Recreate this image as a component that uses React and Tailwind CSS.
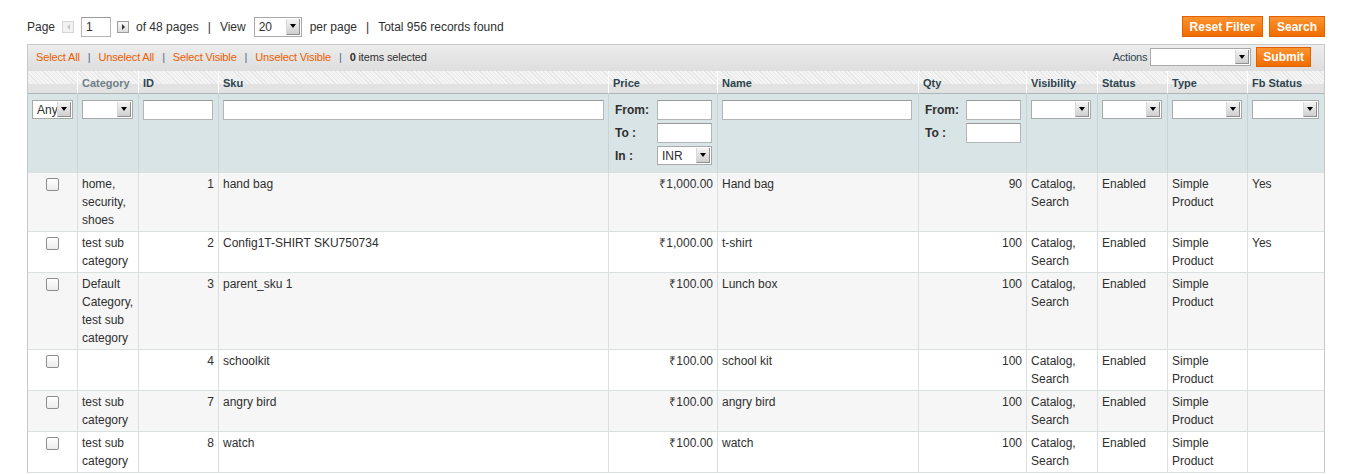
import React from "react";

const cols = [50, 61, 80, 390, 109, 201, 108, 71, 70, 80, 76];

const rows = [
  { cat: "home, security, shoes", id: 1, sku: "hand bag", price: "₹1,000.00", name: "Hand bag", qty: 90, fb: "Yes" },
  { cat: "test sub category", id: 2, sku: "Config1T-SHIRT SKU750734", price: "₹1,000.00", name: "t-shirt", qty: 100, fb: "Yes" },
  { cat: "Default Category, test sub category", id: 3, sku: "parent_sku 1", price: "₹100.00", name: "Lunch box", qty: 100, fb: "" },
  { cat: "", id: 4, sku: "schoolkit", price: "₹100.00", name: "school kit", qty: 100, fb: "" },
  { cat: "test sub category", id: 7, sku: "angry bird", price: "₹100.00", name: "angry bird", qty: 100, fb: "" },
  { cat: "test sub category", id: 8, sku: "watch", price: "₹100.00", name: "watch", qty: 100, fb: "" },
];

const DropArrow = () => (
  <span className="absolute right-[1px] top-[1px] bottom-[1px] w-[14px] flex items-center justify-center bg-[linear-gradient(#f4f4f4,#cfcfcf)] border-r border-b border-[#8f8f8f] border-l border-l-[#d8d8d8]">
    <span className="w-0 h-0 border-l-[3px] border-r-[3px] border-t-[4px] border-l-transparent border-r-transparent border-t-black" />
  </span>
);

const Select = ({ value, className = "" }) => (
  <div className={`relative bg-white border border-[#a9a9a9] text-[12px] leading-none flex items-center pl-[4px] text-[#2f2f2f] ${className}`}>
    {value}
    <DropArrow />
  </div>
);

const Input = ({ value, className = "" }) => (
  <div className={`bg-white border border-[#b5b5b5] border-t-[#9a9a9a] text-[12px] flex items-center pl-[4px] ${className}`}>{value}</div>
);

const OrangeBtn = ({ children, className = "" }) => (
  <button className={`border border-[#e26000] bg-[linear-gradient(#fb9431,#f06c00)] text-white font-bold text-[12px] leading-none ${className}`}>
    {children}
  </button>
);

const Checkbox = () => (
  <span className="inline-block w-[13px] h-[13px] rounded-[2px] border border-[#8e8e8e] bg-[linear-gradient(#ffffff,#ececec)]" />
);

const RangeFilter = ({ withCurrency }) => (
  <div className="flex flex-col gap-[3px]">
    <div className="flex items-center justify-between">
      <span className="font-bold text-[12px]">From:</span>
      <Input className="w-[55px] h-[20px]" />
    </div>
    <div className="flex items-center justify-between">
      <span className="font-bold text-[12px]">To :</span>
      <Input className="w-[55px] h-[20px]" />
    </div>
    {withCurrency && (
      <div className="flex items-center justify-between">
        <span className="font-bold text-[12px]">In :</span>
        <Select value="INR" className="w-[55px] h-[19px]" />
      </div>
    )}
  </div>
);

export default function App() {
  const th = "h-[23px] px-[4px] pt-[2px] text-left font-bold text-[11px] text-[#2d444f] border-r border-white border-b border-b-[#a9b5b8] last:border-r-0";
  const fc = "px-[4px] pt-[6px] align-top border-r border-[#c8d3d6] border-b border-b-[#dadfe0] last:border-r-0";
  const td = "px-[4px] py-[2px] align-top text-[12px] leading-[18px] border-r border-b border-[#dadfe0] last:border-r-0";

  return (
    <div className="px-[27px] pt-[16px] font-['Liberation_Sans',Arial,sans-serif] text-[#2f2f2f] bg-white min-h-[474px]">
      <div className="flex items-center justify-between h-[21px]">
        <div className="flex items-center text-[12px]">
          <span>Page</span>
          <span className="ml-[7px] w-[12px] h-[12px] border border-[#d6d6d6] bg-[#f2f2f2] flex items-center justify-center">
            <span className="w-0 h-0 border-t-[3px] border-b-[3px] border-r-[3px] border-t-transparent border-b-transparent border-r-[#c8c8c8]" />
          </span>
          <Input value="1" className="ml-[7px] w-[30px] h-[20px]" />
          <span className="ml-[6px] w-[12px] h-[12px] border border-[#9d9d9d] bg-[linear-gradient(#fafafa,#dcdcdc)] flex items-center justify-center">
            <span className="w-0 h-0 border-t-[3px] border-b-[3px] border-l-[3px] border-t-transparent border-b-transparent border-l-[#333]" />
          </span>
          <span className="ml-[7px]">of 48 pages</span>
          <span className="mx-[9px]">|</span>
          <span>View</span>
          <Select value="20" className="ml-[8px] w-[48px] h-[20px]" />
          <span className="ml-[8px]">per page</span>
          <span className="mx-[9px]">|</span>
          <span>Total 956 records found</span>
        </div>
        <div className="flex items-center gap-[6px]">
          <OrangeBtn className="h-[21px] px-[7px]">Reset Filter</OrangeBtn>
          <OrangeBtn className="h-[21px] px-[7px]">Search</OrangeBtn>
        </div>
      </div>

      <div className="mt-[7px] border-x border-t border-[#c9c9c9]">
        <div className="h-[26px] pb-[2px] flex items-center justify-between pl-[8px] pr-[13px] bg-[linear-gradient(#ececec,#dedede)] text-[11px]">
          <div className="flex items-center tracking-[-0.15px]">
            <span className="text-[#eb5e00]">Select All</span>
            <span className="mx-[8px] text-[#4b6a90]">|</span>
            <span className="text-[#eb5e00]">Unselect All</span>
            <span className="mx-[8px] text-[#4b6a90]">|</span>
            <span className="text-[#eb5e00]">Select Visible</span>
            <span className="mx-[8px] text-[#4b6a90]">|</span>
            <span className="text-[#eb5e00]">Unselect Visible</span>
            <span className="mx-[8px] text-[#4b6a90]">|</span>
            <span><b>0</b> items selected</span>
          </div>
          <div className="flex items-center">
            <span className="text-[#2d444f] tracking-[-0.2px]">Actions</span>
            <Select className="ml-[3px] w-[101px] h-[18px]" />
            <OrangeBtn className="ml-[5px] h-[20px] px-[6px]">Submit</OrangeBtn>
          </div>
        </div>

        <table className="table-fixed w-full border-separate border-spacing-0">
          <colgroup>
            {cols.map((w, i) => (
              <col key={i} style={{ width: w }} />
            ))}
          </colgroup>
          <thead>
            <tr className="bg-[linear-gradient(to_bottom,transparent_0,transparent_13px,#e2e2e2_13px),repeating-linear-gradient(45deg,#f4f4f4_0,#f4f4f4_2px,#e7e7e7_2px,#e7e7e7_3px)]">
              <th className={th}></th>
              <th className={`${th} text-[#6f7f86]`}>Category</th>
              <th className={th}>ID</th>
              <th className={th}>Sku</th>
              <th className={th}>Price</th>
              <th className={th}>Name</th>
              <th className={th}>Qty</th>
              <th className={th}>Visibility</th>
              <th className={th}>Status</th>
              <th className={th}>Type</th>
              <th className={th}>Fb Status</th>
            </tr>
            <tr className="h-[79px] bg-[#d9e4e6]">
              <td className={fc}>
                <Select value="Any" className="w-[41px] h-[19px]" />
              </td>
              <td className={fc}>
                <Select className="w-[51px] h-[19px]" />
              </td>
              <td className={fc}>
                <Input className="w-[70px] h-[20px]" />
              </td>
              <td className={fc}>
                <Input className="w-full h-[20px]" />
              </td>
              <td className={`${fc} pl-[6px] pr-[5px]`}>
                <RangeFilter withCurrency />
              </td>
              <td className={fc}>
                <Input className="w-[190px] h-[20px]" />
              </td>
              <td className={`${fc} pl-[6px] pr-[5px]`}>
                <RangeFilter />
              </td>
              <td className={fc}>
                <Select className="w-[60px] h-[19px]" />
              </td>
              <td className={fc}>
                <Select className="w-[60px] h-[19px]" />
              </td>
              <td className={fc}>
                <Select className="w-[70px] h-[19px]" />
              </td>
              <td className={fc}>
                <Select className="w-[67px] h-[19px]" />
              </td>
            </tr>
          </thead>
          <tbody>
            {rows.map((r, i) => (
              <tr key={r.id} className={i % 2 === 0 ? "bg-[#f6f6f6]" : "bg-white"}>
                <td className={`${td} text-center pt-[5px]`}>
                  <Checkbox />
                </td>
                <td className={td}>{r.cat}</td>
                <td className={`${td} text-right`}>{r.id}</td>
                <td className={td}>{r.sku}</td>
                <td className={`${td} text-right`}>{r.price}</td>
                <td className={td}>{r.name}</td>
                <td className={`${td} text-right`}>{r.qty}</td>
                <td className={td}>Catalog, Search</td>
                <td className={td}>Enabled</td>
                <td className={td}>Simple Product</td>
                <td className={td}>{r.fb}</td>
              </tr>
            ))}
          </tbody>
        </table>
      </div>
    </div>
  );
}
